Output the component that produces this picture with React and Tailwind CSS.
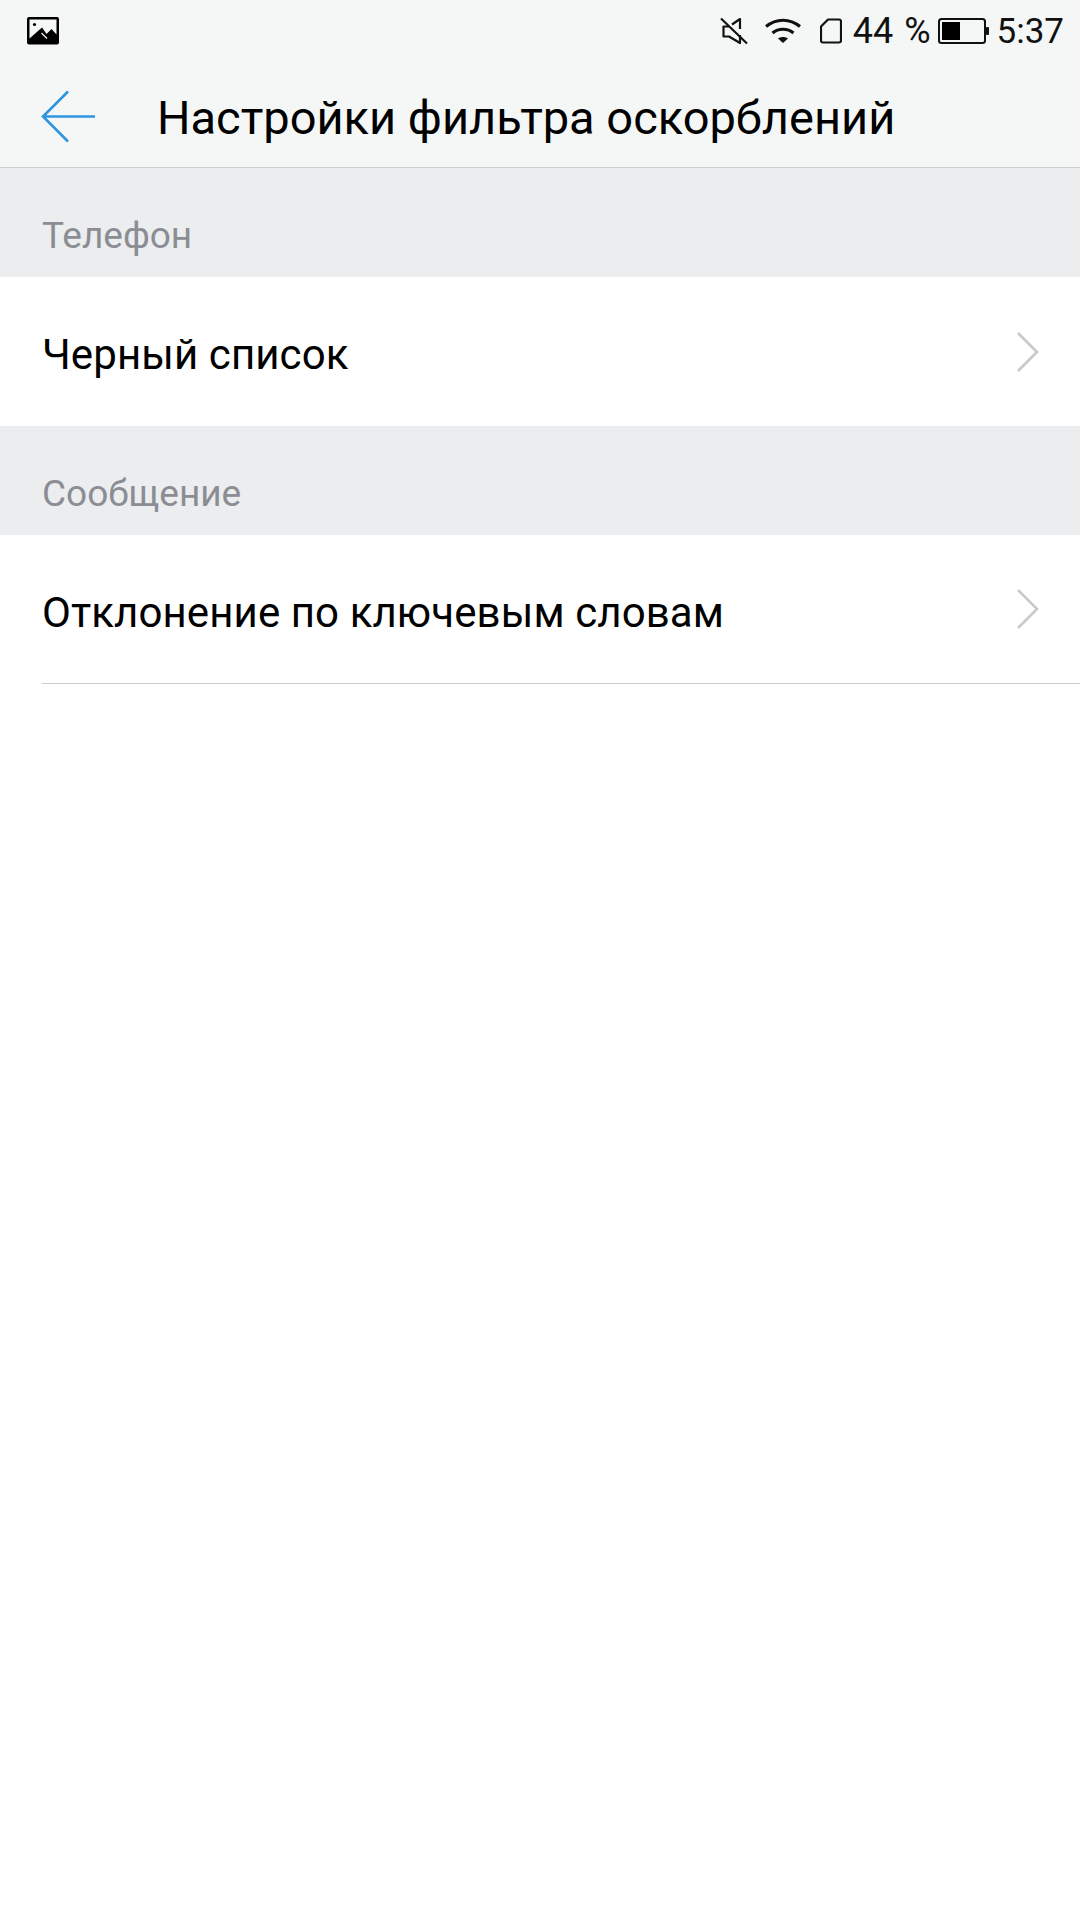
import React from 'react';

function ImageIcon() {
  return (
    <svg width="34" height="30" viewBox="0 0 34 30">
      <rect x="1" y="1" width="32" height="27.500" rx="2" fill="#000" />
      <path d="M3.500 3.500h27v15l-5-5.500-5 5-4.500-6.500-12.500 11z" fill="#f5f7f7" />
      <circle cx="8.500" cy="8.500" r="1.600" fill="#000" />
      <path d="M15.500 17l5.500 5.500" stroke="#f5f7f7" strokeWidth="1.200" />
    </svg>
  );
}

function StatusIcons() {
  return (
    <div className="flex items-center h-full">
      {/* muted speaker */}
      <svg width="28" height="28" viewBox="0 0 28 28" fill="none" stroke="#111" strokeWidth="2.200" className="mr-[16px]">
        <path d="M9 9.500H3.500v10H9l11 6.500V18M20 12V2L12 7.500" strokeLinejoin="round" />
        <path d="M1 1.500l26 25" />
      </svg>
      {/* wifi */}
      <svg width="38" height="28" viewBox="0 0 38 28" fill="none" stroke="#111" strokeWidth="3" className="mr-[18px]">
        <path d="M2 9.500c10-8.500 24-8.500 34 0" />
        <path d="M8.500 16c6-5 15-5 21 0" />
        <path d="M19 26l-5-4.500c3-2 7-2 10 0z" fill="#111" stroke="none" />
      </svg>
      {/* sim */}
      <svg width="22" height="26" viewBox="0 0 22 26" fill="none" stroke="#111" strokeWidth="2.200" className="mr-[11px]">
        <path d="M8 1.500h11a2 2 0 0 1 2 2v19a2 2 0 0 1-2 2H3a2 2 0 0 1-2-2V8.500z" strokeLinejoin="round" />
      </svg>
      <span className="text-[36px] leading-none text-[#111] mr-[7px] whitespace-nowrap [word-spacing:2px]">44 %</span>
      {/* battery */}
      <svg width="52" height="26" viewBox="0 0 52 26" fill="none" className="mr-[7px]">
        <rect x="1" y="1" width="46" height="24" rx="2.500" stroke="#111" strokeWidth="2" />
        <rect x="4" y="4" width="18" height="18" fill="#000" />
        <rect x="48" y="9" width="3" height="8" rx="1" fill="#111" />
      </svg>
      <span className="text-[35px] leading-none text-[#111]">5:37</span>
    </div>
  );
}

function Chevron() {
  return (
    <svg width="24" height="42" viewBox="0 0 24 42" fill="none" stroke="#c9c9c9" strokeWidth="2.600">
      <path d="M2 2l19 19L2 40" />
    </svg>
  );
}

function SectionLabel({ children }) {
  return (
    <div className="h-[109px] bg-[#ecedef] flex items-end pl-[42px] pb-[19px]">
      <span className="text-[37px] leading-[44px] text-[#8b8d94]">{children}</span>
    </div>
  );
}

function Row({ height, children }) {
  return (
    <div className={`${height} bg-white flex items-center justify-between pl-[42px] pr-[40px]`}>
      <span className="text-[42px] leading-none tracking-[0.1px] text-black whitespace-nowrap mt-[7px]">{children}</span>
      <Chevron />
    </div>
  );
}

export default function App() {
  return (
    <div className="w-[1080px] h-[1920px] bg-white flex flex-col font-['Roboto',sans-serif]">
      <div className="h-[168px] bg-[#f5f7f7] border-b border-[#cbcccd] flex flex-col">
        <div className="h-[62px] flex items-center justify-between pl-[26px] pr-[16px]">
          <ImageIcon />
          <StatusIcons />
        </div>
        <div className="flex items-center pl-[41px] mt-[22px]">
          <svg width="54" height="54" viewBox="0 0 54 54" fill="none" stroke="#2f95e0" strokeWidth="2.600">
            <path d="M27 1.500L2 26.500l25 25M2 26.500h52" />
          </svg>
          <span className="ml-[62px] mt-[2px] text-[47px] leading-[64px] text-black whitespace-nowrap">Настройки фильтра оскорблений</span>
        </div>
      </div>
      <SectionLabel>Телефон</SectionLabel>
      <Row height="h-[149px]">Черный список</Row>
      <SectionLabel>Сообщение</SectionLabel>
      <Row height="h-[148px]">Отклонение по ключевым словам</Row>
      <div className="ml-[42px] h-px bg-[#cbcccd]" />
    </div>
  );
}
